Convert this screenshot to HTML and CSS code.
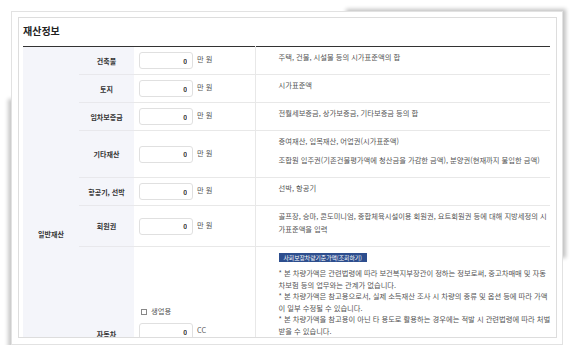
FILE: index.html
```
<!DOCTYPE html>
<html lang="ko">
<head>
    <meta charset="UTF-8">
    <title>재산정보</title>
    <link rel="stylesheet" href="styles.css">
</head>
<body>

<div class="sheet">
    <div class="box">
        <h2>재산정보</h2>
        <table class="asset">
            <colgroup>
                <col class="c-group">
                <col class="c-label">
                <col class="c-input">
                <col>
            </colgroup>
            <tr>
                <th class="group" rowspan="7">일반재산</th>
                <th>건축물</th>
                <td class="amount"><input class="num" type="text" value="0"> 만 원</td>
                <td class="desc"><p>주택, 건물, 시설물 등의 시가표준액의 합</p></td>
            </tr>
            <tr>
                <th>토지</th>
                <td class="amount"><input class="num" type="text" value="0"> 만 원</td>
                <td class="desc"><p>시가표준액</p></td>
            </tr>
            <tr>
                <th>임차보증금</th>
                <td class="amount"><input class="num" type="text" value="0"> 만 원</td>
                <td class="desc"><p>전월세보증금, 상가보증금, 기타보증금 등의 합</p></td>
            </tr>
            <tr>
                <th>기타재산</th>
                <td class="amount"><input class="num" type="text" value="0"> 만 원</td>
                <td class="desc">
                    <p>증여재산, 입목재산, 어업권(시가표준액)</p>
                    <p>조합원 입주권(기존건물평가액에 청산금을 가감한 금액), 분양권(현재까지 불입한 금액)</p>
                </td>
            </tr>
            <tr>
                <th>항공기, 선박</th>
                <td class="amount"><input class="num" type="text" value="0"> 만 원</td>
                <td class="desc"><p>선박, 항공기</p></td>
            </tr>
            <tr>
                <th>회원권</th>
                <td class="amount"><input class="num" type="text" value="0"> 만 원</td>
                <td class="desc"><p>골프장, 승마, 콘도미니엄, 종합체육시설이용 회원권, 요트회원권 등에 대해 지방세정의 시<br>가표준액을 입력</p></td>
            </tr>
            <tr class="car">
                <th>자동차</th>
                <td class="amount">
                    <label class="check"><input type="checkbox"> 생업용</label>
                    <div class="line"><input class="num" type="text" value="0"> CC</div>
                    <div class="line"><input class="num" type="text" value="0"> 만 원</div>
                </td>
                <td class="desc">
                    <button class="lookup">사회보장차량기준가액(조회하기)</button>
                    <p class="note">* 본 차량가액은 관련법령에 따라 보건복지부장관이 정하는 정보로써, 중고차매매 및 자동<br>차보험 등의 업무와는 관계가 없습니다.<br>* 본 차량가액은 참고용으로서, 실제 소득재산 조사 시 차량의 종류 및 옵션 등에 따라 가액<br>이 일부 수정될 수 있습니다.<br>* 본 차량가액을 참고용이 아닌 타 용도로 활용하는 경우에는 적발 시 관련법령에 따라 처벌<br>받을 수 있습니다.</p>
                </td>
            </tr>
        </table>
    </div>
</div>

</body>
</html>
```

FILE: styles.css
```
body {
    margin: 0;
    font-family: "Noto Sans CJK KR", "Noto Sans", sans-serif;
    color: #555;
}
.sheet {
    position: relative;
    box-sizing: border-box;
    width: 552px;
    height: 334px;
    margin: 11px 0 0 11px;
    padding: 5px 5px 6px 6px;
    background: #fff;
    border: 1px solid #e2e2e2;
}
/* lifted corner shadows */
.sheet::before,
.sheet::after {
    content: "";
    position: absolute;
    z-index: -1;
    width: 40%;
    height: 75%;
}
.sheet::before {
    top: 0;
    right: 0;
    box-shadow: 4px -3px 4px rgba(0, 0, 0, 0.24);
}
.sheet::after {
    bottom: 0;
    left: 0;
    box-shadow: -4px 4px 4px rgba(0, 0, 0, 0.22);
}
.box {
    box-sizing: border-box;
    height: 321px;
    padding: 0 6px 0 4px;
    border: 1px solid #ddd;
    overflow: hidden;
}
h2 {
    margin: 0;
    padding: 6px 0 8px;
    font-size: 10px;
    line-height: 14px;
    font-weight: bold;
    color: #222;
}
.asset {
    width: 100%;
    table-layout: fixed;
    border-collapse: collapse;
    border-top: 1px solid #333;
    font-size: 7.3px;
}
.c-group { width: 56px; }
.c-label { width: 55px; }
.c-input { width: 121px; }
.asset th {
    background: #f4f5fa;
    color: #333;
    font-size: 7px;
    font-weight: bold;
    text-align: center;
    border-bottom: 1px solid #e8e8ec;
}
.asset th.group {
    border-bottom: none;
}
.asset td {
    border-bottom: 1px solid #e8e8e8;
    vertical-align: middle;
}
.amount {
    padding: 5px 0 5px 5px;
    white-space: nowrap;
}
.num {
    box-sizing: border-box;
    width: 54px;
    height: 17px;
    margin: 0 2px 0 0;
    padding: 0 5px 0 0;
    border: 1px solid #e0e0e0;
    border-radius: 3px;
    outline: none;
    background: #fff;
    text-align: right;
    font-family: inherit;
    font-size: 6.5px;
    font-weight: bold;
    color: #333;
    vertical-align: middle;
}
.desc {
    border-left: 1px solid #e8e8e8;
    padding: 4px 8px 10px 23px;
    line-height: 13px;
    white-space: nowrap;
    vertical-align: top !important;
}
.desc p {
    margin: 0;
}
.desc p + p {
    margin-top: 6px;
}
.car {
    height: 175px;
}
.check {
    display: block;
    line-height: 11px;
    padding-left: 2px;
}
.check input {
    appearance: none;
    box-sizing: border-box;
    width: 6px;
    height: 6px;
    margin: 0 2px 0 0;
    border: 1px solid #888;
    vertical-align: -0.5px;
}
.line {
    margin-top: 6px;
}
.line + .line {
    margin-top: 5px;
}
.lookup {
    display: block;
    margin-top: 2px;
    height: 9px;
    padding: 0 5px;
    border: none;
    background: #2d4e8e;
    color: #fff;
    font-family: inherit;
    font-size: 5.8px;
    line-height: 9px;
}
.note {
    margin-top: 6px !important;
    line-height: 11.6px;
}
```
